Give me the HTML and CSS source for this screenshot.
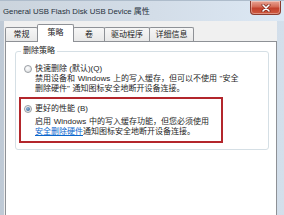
FILE: index.html
```html
<!DOCTYPE html>
<html lang="zh-CN">
<head>
<meta charset="utf-8">
<title>属性</title>
<link rel="stylesheet" href="styles.css">
</head>
<body>
<div class="window">
  <div class="titlebar">
    <span class="title">General USB Flash Disk USB Device <span class="cjk">属性</span></span>
    <span class="close">
      <svg width="10" height="8" viewBox="0 0 10 8"><path d="M2 1 L8 7 M8 1 L2 7" stroke="#7a2a20" stroke-width="3" stroke-linecap="round"/><path d="M2 1 L8 7 M8 1 L2 7" stroke="#ffffff" stroke-width="1.6" stroke-linecap="round"/></svg>
    </span>
  </div>
  <div class="client">
    <div class="tabs">
      <div class="tab w32">常规</div>
      <div class="tab active w36">策略</div>
      <div class="tab w31">卷</div>
      <div class="tab w45">驱动程序</div>
      <div class="tab w44">详细信息</div>
    </div>
    <div class="panel">
      <fieldset class="group">
        <legend>删除策略</legend>
        <div class="option">
          <div class="radio-row"><span class="radio"></span><span>快速删除 (默认)(Q)</span></div>
          <p class="desc">禁用设备和 Windows 上的写入缓存，但可以不使用 "安全<br>删除硬件" 通知图标安全地断开设备连接。</p>
        </div>
        <div class="option highlight">
          <div class="radio-row"><span class="radio checked"></span><span>更好的性能 (B)</span></div>
          <p class="desc">启用 Windows 中的写入缓存功能，但您必须使用<br><a class="link" href="#">安全删除硬件</a>通知图标安全地断开设备连接。</p>
        </div>
      </fieldset>
    </div>
  </div>
</div>
</body>
</html>
```

FILE: styles.css
```css
html, body {
  margin: 0;
  padding: 0;
}
body {
  width: 284px;
  height: 215px;
  overflow: hidden;
  background: #c4cfda;
  font-family: "Liberation Sans", "Noto Sans CJK SC", sans-serif;
  font-size: 8px;
  color: #1e1e1e;
}
.window {
  display: flex;
  flex-direction: column;
  height: 215px;
  background: linear-gradient(to right, #bfcad6, #c9d5e1 50%, #d3dfeb);
}
.titlebar {
  height: 21px;
  display: flex;
  align-items: flex-start;
  justify-content: space-between;
  background: linear-gradient(to right, #cbd4dd, #d3dde8 55%, #dce8f4);
  border-top: 1px solid #aebccb;
  box-sizing: border-box;
}
.title {
  font-family: "Liberation Sans", "Noto Sans CJK SC", sans-serif;
  font-size: 7.8px;
  color: #26313c;
  margin: 4px 0 0 3px;
  line-height: 11px;
}
.title .cjk {
  font-family: "Noto Sans CJK SC", sans-serif;
  font-size: 8px;
}
.close {
  width: 31px;
  height: 14px;
  margin: 0 3px 0 0;
  box-sizing: border-box;
  border: 1px solid #8c3b2e;
  border-top: none;
  border-radius: 0 0 4px 4px;
  background: linear-gradient(#e9a595, #d46a55 45%, #c2412c 55%, #cf5a40);
  display: flex;
  align-items: center;
  justify-content: center;
  box-shadow: inset 0 0 0 1px rgba(255,255,255,0.35);
}
.close svg { display: block; }
.client {
  flex: 1;
  margin: 0 7px 0 4px;
  background: #f0f0f0;
  display: flex;
  flex-direction: column;
}
.tabs {
  display: flex;
  align-items: flex-end;
  height: 20px;
  padding-left: 1px;
  position: relative;
  z-index: 1;
}
.tab {
  height: 14px;
  box-sizing: border-box;
  border: 1px solid #8e9196;
  border-bottom: none;
  border-radius: 2px 2px 0 0;
  background: linear-gradient(#f6f6f6, #e8e8e8);
  display: flex;
  align-items: center;
  justify-content: center;
  line-height: 10px;
  color: #222;
  margin-left: -1px;
}
.tab:first-child { margin-left: 0; }
.tab.active {
  height: 18px;
  background: #ffffff;
  margin-bottom: -1px;
  padding-bottom: 2px;
}
.w32 { width: 33px; }
.w36 { width: 37px; }
.w31 { width: 32px; }
.w45 { width: 46px; }
.w44 { width: 45px; }
.panel {
  flex: 1;
  margin: 0 0 0 1px;
  background: #ffffff;
  border: 1px solid #8e9196;
  border-bottom: none;
  padding: 4px 7px 0 9px;
}
.group {
  margin: 0;
  padding: 0 0 6px 0;
  border: 1px solid #d5dfe5;
  border-radius: 3px;
}
.group legend {
  margin-left: 5px;
  padding: 0 2px;
  line-height: 10px;
  color: #222;
}
.option {
  margin-top: 8px;
}
.radio-row {
  display: flex;
  align-items: center;
  gap: 3px;
  line-height: 10px;
  padding-left: 8px;
}
.radio {
  width: 8px;
  height: 8px;
  box-sizing: border-box;
  border-radius: 50%;
  border: 1px solid #9a9ea3;
  background: radial-gradient(circle at 40% 35%, #ffffff, #e2e4e6 70%);
  display: flex;
  align-items: center;
  justify-content: center;
}
.radio.checked::after {
  content: "";
  width: 4px;
  height: 4px;
  border-radius: 50%;
  background: radial-gradient(circle at 40% 35%, #8fb3d9, #2d5a8a);
}
.desc {
  margin: 0 0 0 19px;
  line-height: 10px;
  white-space: nowrap;
  word-spacing: 0.5px;
}
.highlight {
  margin: 3px 0 0 3px;
  width: 204px;
  box-sizing: border-box;
  border: 2px solid #b3262c;
  padding: 5px 0 4px 1px;
}
.highlight .radio-row { padding-left: 2px; }
.highlight .desc {
  margin: 3px 0 0 13px;
}
.link {
  color: #0a66cc;
  text-decoration: underline;
}
```
